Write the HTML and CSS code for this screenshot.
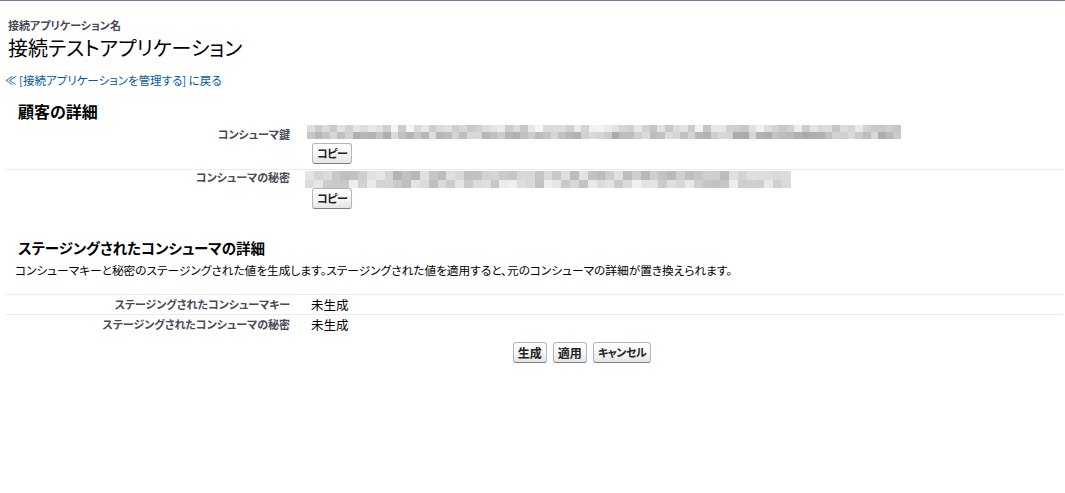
FILE: index.html
```html
<!DOCTYPE html>
<html lang="ja">
<head>
<meta charset="utf-8">
<title>接続テストアプリケーション</title>
<link rel="stylesheet" href="styles.css">
</head>
<body>
<div class="page">
  <div class="page-header">
    <div class="page-type">接続アプリケーション名</div>
    <h1 class="page-title">接続テストアプリケーション</h1>
  </div>
  <div class="back"><a href="#">≪ [接続アプリケーションを管理する] に戻る</a></div>

  <section class="block">
    <h2 class="block-title">顧客の詳細</h2>
    <div class="detail">
      <div class="row row-key">
        <div class="label">コンシューマ鍵</div>
        <div class="data">
          <div class="blur blur-key" data-cols="78" data-seed="7"></div>
          <button class="btn btn-kana">コピー</button>
        </div>
      </div>
      <div class="row row-secret">
        <div class="label">コンシューマの秘密</div>
        <div class="data">
          <div class="blur blur-secret" data-cols="55" data-seed="19"></div>
          <button class="btn btn-kana">コピー</button>
        </div>
      </div>
    </div>
  </section>

  <section class="block block-staged">
    <h2 class="block-title block-title-2">ステージングされたコンシューマの詳細</h2>
    <p class="desc">コンシューマキーと秘密のステージングされた値を生成します。ステージングされた値を適用すると、元のコンシューマの詳細が置き換えられます。</p>
    <div class="detail detail-staged">
      <div class="row row-simple">
        <div class="label">ステージングされたコンシューマキー</div>
        <div class="data text">未生成</div>
      </div>
      <div class="row row-simple">
        <div class="label">ステージングされたコンシューマの秘密</div>
        <div class="data text">未生成</div>
      </div>
    </div>
    <div class="actions">
      <button class="btn">生成</button>
      <button class="btn">適用</button>
      <button class="btn btn-kana">キャンセル</button>
    </div>
  </section>
</div>
<script src="script.js"></script>
</body>
</html>
```

FILE: styles.css
```css
html, body {
  margin: 0;
  padding: 0;
  background: #fff;
}
body {
  border-top: 1px solid #6f7b94;
  font-family: "Noto Sans CJK JP", "Noto Sans", sans-serif;
  font-feature-settings: "palt";
  color: #000;
}
.page {
  padding: 0 2px 0 5px;
}
.page-header {
  padding: 16px 0 0 3px;
}
.page-type {
  font-size: 11px;
  font-weight: bold;
  color: #4a4a56;
  line-height: 16px;
}
.page-title {
  margin: 0;
  font-size: 20px;
  font-weight: normal;
  line-height: 29px;
}
.back {
  margin-top: 10px;
  font-size: 11.5px;
  line-height: 16px;
}
.back a {
  color: #015ba7;
  text-decoration: none;
}
.block-title {
  margin: 13px 0 0 13px;
  font-size: 16px;
  font-weight: bold;
  line-height: 20px;
}
.detail {
  margin-top: 4px;
}
.row {
  display: flex;
  border-bottom: 1px solid #ececec;
}
.label {
  width: 285px;
  flex: none;
  text-align: right;
  font-size: 11px;
  font-weight: bold;
  color: #4a4a56;
  line-height: 14px;
}
.row-key .label { padding-top: 2px; }
.row-secret .label { padding-top: 0; }
.data {
  padding-left: 17px;
}
.row-key .data {
  padding-bottom: 5px;
}
.row-secret {
  border-bottom: none;
}
.row-secret .data {
  padding-left: 15px;
}
.blur {
  display: grid;
  grid-auto-flow: column;
  grid-template-rows: 7px 7px;
}
.blur-key {
  width: 594px;
}
.blur-secret {
  width: 486px;
  grid-template-rows: 9px 8px;
  margin-top: 1px;
}
.blur span {
  display: block;
}
.btn {
  display: block;
  margin: 4px 0 0 5px;
  height: 21px;
  padding: 0 4px;
  font-family: inherit;
  font-feature-settings: "palt";
  font-size: 12px;
  font-weight: bold;
  color: #222;
  border: 1px solid #b5b5b5;
  border-bottom-color: #7f7f7f;
  border-radius: 3px;
  background: linear-gradient(#ffffff, #f4f4f4 60%, #e4e4e4);
  line-height: 17px;
}
.btn-kana {
  font-size: 11px;
  letter-spacing: -0.5px;
}
.row-secret .btn {
  margin-left: 7px;
  margin-top: 0;
}
.block-staged {
  margin-top: 29px;
}
.block-title-2 {
  margin-left: 13px;
  font-size: 14.5px;
}
.desc {
  margin: 4px 0 0 10px;
  font-size: 11.7px;
  line-height: 16px;
}
.detail-staged {
  margin-top: 16px;
  border-top: 1px solid #ececec;
}
.row-simple {
  height: 19px;
}
.row-simple:first-child {
  border-bottom: 1px solid #ececec;
}
.row-simple:last-child {
  border-bottom: none;
}
.row-simple .label {
  padding-top: 2px;
}
.text {
  padding-left: 21px;
  font-size: 12.5px;
  line-height: 18px;
  padding-top: 1px;
}
.actions {
  display: flex;
  justify-content: center;
  gap: 6px;
  margin-top: 8px;
  padding-left: 96px;
}
.actions .btn {
  margin: 0;
}
```

FILE: script.js
```js
(function () {
  var blurs = document.querySelectorAll('.blur');
  blurs.forEach(function (el) {
    var cols = parseInt(el.getAttribute('data-cols'), 10);
    var seed = parseInt(el.getAttribute('data-seed'), 10);
    function rnd() {
      seed = (seed * 9301 + 49297) % 233280;
      return seed / 233280;
    }
    el.style.gridTemplateColumns = 'repeat(' + cols + ', 1fr)';
    for (var c = 0; c < cols; c++) {
      for (var r = 0; r < 2; r++) {
        var s = document.createElement('span');
        var base = r === 0 ? 222 : 196;
        if (el.classList.contains('blur-secret')) base = r === 0 ? 205 : 215;
        var v = Math.round(base + (rnd() - 0.5) * 50);
        if (v > 250) v = 250;
        s.style.background = 'rgb(' + v + ',' + v + ',' + v + ')';
        el.appendChild(s);
      }
    }
  });
})();
```
